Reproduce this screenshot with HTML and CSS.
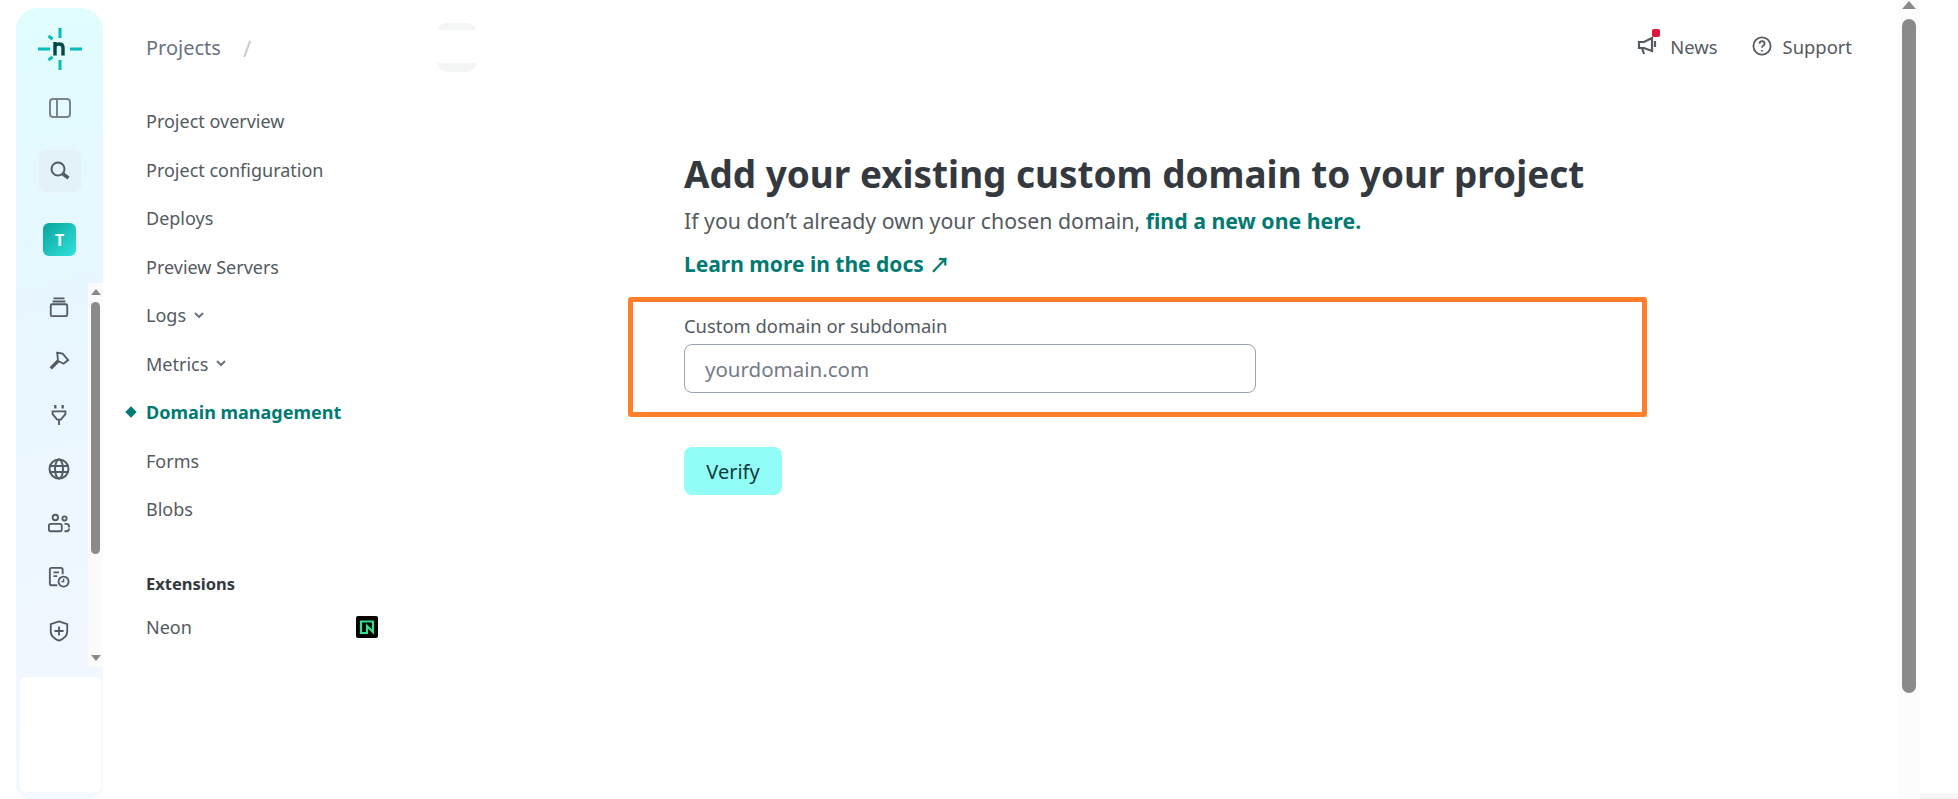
FILE: index.html
```html
<!DOCTYPE html>
<html lang="en">
<head>
  <meta charset="UTF-8">
  <title>Add custom domain</title>
  <link rel="stylesheet" href="styles.css">
</head>
<body>
  <div class="page">
    <!-- Icon rail -->
    <div class="rail">
      <div class="rail-top">
        <svg class="logo" viewBox="0 0 44 42" fill="none">
          <path d="M22 0v10M22 32v10M0 21h12M32 21h12M10.500 8l4 3M10.500 32l4-3" stroke="#05bdba" stroke-width="3"/>
          <path d="M17 14v13.500M17 18q1.500-2 4-2 4 0 4 3.500v8" stroke="#014847" stroke-width="3.400"/>
        </svg>
        <svg class="rail-icon panel" viewBox="0 0 22 20" fill="none" stroke="#7d8589" stroke-width="2">
          <rect x="1" y="1" width="20" height="18" rx="3"/><path d="M8 1v18"/>
        </svg>
        <div class="search-box">
          <svg viewBox="0 0 22 22" fill="none" stroke="#545a61" stroke-width="2">
            <circle cx="9" cy="9" r="6.500"/><path d="M14 14l5.500 4" stroke-width="3.500"/>
          </svg>
        </div>
        <div class="avatar">T</div>
      </div>
      <div class="rail-scroll">
        <div class="rail-icons">
          <svg viewBox="0 0 22 24" fill="none" stroke="#545a61" stroke-width="2">
            <rect x="2" y="9" width="18" height="13" rx="1.500"/><path d="M4 6h14M5 2.500h12"/>
          </svg>
          <svg viewBox="0 0 24 24" fill="none" stroke="#545a61" stroke-width="2">
            <path d="M10 3l6 1 6 7-5 4-6-3z"/><path d="M11 12l-8 8" stroke-width="3.500"/>
          </svg>
          <svg viewBox="0 0 22 24" fill="none" stroke="#545a61" stroke-width="2">
            <path d="M7 1v4M15 1v4" stroke-width="2.500"/><path d="M4 8h14v3l-5 6h-4l-5-6zM11 17v6"/>
          </svg>
          <svg viewBox="0 0 22 22" fill="none" stroke="#545a61" stroke-width="2">
            <circle cx="11" cy="11" r="9.500"/><ellipse cx="11" cy="11" rx="4" ry="9.500"/><path d="M2 8h18M2 14h18"/>
          </svg>
          <svg viewBox="0 0 24 22" fill="none" stroke="#545a61" stroke-width="2">
            <circle cx="8" cy="5" r="3"/><circle cx="18" cy="6" r="2.300"/>
            <rect x="1" y="12" width="14" height="8" rx="2"/><path d="M18 12h2q3 0 3 3v1M18 20h2q3 0 3-3"/>
          </svg>
          <svg viewBox="0 0 24 24" fill="none" stroke="#545a61" stroke-width="2">
            <path d="M10 21H4q-2 0-2-2V4q0-2 2-2h10q2 0 2 2v5"/><path d="M6 7h6M6 11h4"/>
            <circle cx="17" cy="17" r="5.500"/><path d="M17 14v3h-2.500" stroke-width="1.500"/>
          </svg>
          <svg viewBox="0 0 22 24" fill="none" stroke="#545a61" stroke-width="2">
            <path d="M11 1.500l9 3v8q0 6.500-9 10-9-3.500-9-10v-8z"/><path d="M11 7v10M6 12h10"/>
          </svg>
        </div>
        <div class="rail-scrollbar">
          <span class="arrow-up"></span>
          <span class="rail-thumb"></span>
          <span class="arrow-down"></span>
        </div>
      </div>
      <div class="rail-card"></div>
    </div>

    <!-- Project nav -->
    <div class="sidebar">
      <div class="breadcrumb">
        <span class="crumb">Projects</span>
        <span class="crumb-sep">/</span>
        <span class="crumb-skeleton"></span>
      </div>
      <ul class="nav">
        <li>Project overview</li>
        <li>Project configuration</li>
        <li>Deploys</li>
        <li>Preview Servers</li>
        <li>Logs
          <svg class="caret" viewBox="0 0 10 7" fill="none" stroke="#6b7280" stroke-width="2"><path d="M1 1l4 4 4-4"/></svg>
        </li>
        <li>Metrics
          <svg class="caret" viewBox="0 0 10 7" fill="none" stroke="#6b7280" stroke-width="2"><path d="M1 1l4 4 4-4"/></svg>
        </li>
        <li class="active">Domain management</li>
        <li>Forms</li>
        <li>Blobs</li>
      </ul>
      <div class="nav-heading">Extensions</div>
      <div class="nav-ext">
        <span>Neon</span>
        <svg class="neon" viewBox="0 0 22 22">
          <rect width="22" height="22" rx="2" fill="#000"/>
          <path d="M5 17V5.500h12V16l-6-6v7z" fill="none" stroke="#2fe08e" stroke-width="2.200"/>
        </svg>
      </div>
    </div>

    <!-- Main content -->
    <div class="main">
      <div class="topbar">
        <a class="top-link">
          <span class="news-icon">
            <svg viewBox="0 0 22 20" fill="none" stroke="#545a61" stroke-width="2.200">
              <path d="M2 6h5l8-4v13l-8-3H2zM5 12l2 6M18 5v6"/>
            </svg>
            <span class="news-dot"></span>
          </span>
          News
        </a>
        <a class="top-link">
          <svg class="help-icon" viewBox="0 0 20 20" fill="none" stroke="#545a61" stroke-width="1.800">
            <circle cx="10" cy="10" r="8.600"/>
            <path d="M7.500 7.800q0-2.600 2.600-2.600t2.500 2.300q0 1.400-1.400 2.200-1.200.700-1.200 2"/>
            <path d="M10 14v1.500"/>
          </svg>
          Support
        </a>
      </div>
      <div class="content">
        <h1>Add your existing custom domain to your project</h1>
        <p class="lead">If you don’t already own your chosen domain, <a>find a new one here.</a></p>
        <p class="docs"><a>Learn more in the docs ↗</a></p>
        <div class="field-box">
          <label for="domain">Custom domain or subdomain</label>
          <input id="domain" type="text" placeholder="yourdomain.com">
        </div>
        <button class="verify" type="button">Verify</button>
      </div>
    </div>

    <div class="page-scrollbar">
      <span class="arrow-up"></span>
      <span class="page-thumb"></span>
    </div>
    <div class="page-gutter"></div>
  </div>
</body>
</html>
```

FILE: styles.css
```css
/* Reset and base styles */
* {
  margin: 0;
  padding: 0;
  box-sizing: border-box;
}

html, body {
  height: 799px;
  overflow: hidden;
  background: white;
}

body {
  font-family: "Noto Sans", "Noto Sans CJK KR", sans-serif;
  color: #545a61;
}

.page {
  display: flex;
  height: 799px;
}

/* Icon rail */
.rail {
  width: 87px;
  margin: 8px 0 0 16px;
  flex-shrink: 0;
  display: flex;
  flex-direction: column;
  border-radius: 22px 22px 14px 14px;
  background: linear-gradient(165deg, #e0fdfd 0%, #e8f6ff 40%, #f5f8ff 100%);
}

.rail-top {
  height: 275px;
  display: flex;
  flex-direction: column;
  align-items: center;
}

.logo {
  width: 44px;
  height: 42px;
  margin-top: 20px;
}

.rail-icon.panel {
  width: 22px;
  height: 20px;
  margin-top: 28px;
}

.search-box {
  width: 44px;
  height: 44px;
  margin-top: 31px;
  display: flex;
  align-items: center;
  justify-content: center;
  border-radius: 8px;
  background: #e3f2f7;
  border: 1px solid #edf6fa;
}

.search-box svg {
  width: 22px;
  height: 22px;
}

.avatar {
  width: 33px;
  height: 33px;
  margin-top: 30px;
  display: flex;
  align-items: center;
  justify-content: center;
  border-radius: 6px;
  background: linear-gradient(135deg, #0aa39c, #2fe3db);
  color: white;
  font-size: 16px;
  font-weight: 700;
}

.rail-scroll {
  height: 384px;
  display: flex;
}

.rail-icons {
  width: 72px;
  padding: 13px 0 0 14px;
  display: flex;
  flex-direction: column;
  align-items: center;
  gap: 32px;
}

.rail-icons svg {
  width: 22px;
  height: 22px;
}

.rail-scrollbar {
  width: 15px;
  background: #fbfbfb;
  display: flex;
  flex-direction: column;
  align-items: center;
  padding: 6px 0;
}

.rail-thumb {
  width: 9px;
  height: 252px;
  margin-top: 7px;
  border-radius: 5px;
  background: #8a8a8a;
}

.arrow-up {
  width: 0;
  height: 0;
  border-left: 5px solid transparent;
  border-right: 5px solid transparent;
  border-bottom: 6px solid #8a8a8a;
}

.arrow-down {
  width: 0;
  height: 0;
  margin-top: auto;
  border-left: 5px solid transparent;
  border-right: 5px solid transparent;
  border-top: 6px solid #8a8a8a;
}

.rail-card {
  flex: 1;
  margin: 10px 2px 7px 4px;
  background: white;
  border-radius: 6px;
}

/* Project nav */
.sidebar {
  width: 375px;
  flex-shrink: 0;
  padding: 0 0 0 43px;
}

.breadcrumb {
  height: 97px;
  padding-top: 23px;
  display: flex;
  align-items: flex-start;
}

.crumb {
  font-size: 20px;
  line-height: 50px;
  color: #6b7280;
}

.crumb-sep {
  margin-left: 22px;
  font-size: 22px;
  line-height: 50px;
  color: #c4c8cc;
}

.crumb-skeleton {
  width: 40px;
  height: 49px;
  margin-left: 186px;
  border-radius: 10px;
  background: linear-gradient(#f4f6f6 0 7px, white 7px 40px, #f4f6f6 40px);
}

.nav {
  list-style: none;
}

.nav li {
  height: 48.500px;
  display: flex;
  align-items: center;
  gap: 8px;
  font-size: 18px;
  position: relative;
}

.caret {
  width: 10px;
  height: 7px;
}

.nav li.active {
  color: #007a72;
  font-weight: 700;
}

/* diamond marker in front of the current page */
.nav li.active::before {
  content: "";
  position: absolute;
  left: -19px;
  top: 20px;
  width: 8px;
  height: 8px;
  background: #007a72;
  transform: rotate(45deg);
}

.nav-heading {
  margin-top: 37px;
  font-size: 16.500px;
  font-weight: 700;
  color: #33393f;
  line-height: 26px;
}

.nav-ext {
  width: 232px;
  height: 48px;
  margin-top: 6px;
  display: flex;
  align-items: center;
  justify-content: space-between;
  font-size: 18px;
}

.neon {
  width: 22px;
  height: 22px;
}

/* Main content */
.main {
  flex: 1;
  min-width: 0;
}

.topbar {
  height: 92px;
  padding: 30px 46px 0 0;
  display: flex;
  justify-content: flex-end;
  gap: 34px;
}

.top-link {
  display: flex;
  align-items: center;
  gap: 11px;
  height: 32px;
  font-size: 18.400px;
}

.news-icon {
  position: relative;
  width: 22px;
  height: 20px;
}

.news-icon svg {
  width: 22px;
  height: 20px;
}

.news-dot {
  position: absolute;
  top: -7px;
  right: -1px;
  width: 8px;
  height: 8px;
  border-radius: 2px;
  background: #e0163c;
}

.help-icon {
  width: 20px;
  height: 20px;
}

.content {
  padding: 56px 0 0 206px;
}

h1 {
  font-size: 36.900px;
  line-height: 52px;
  font-weight: 700;
  color: #33393f;
}

.lead, .docs {
  line-height: 30px;
}

.lead {
  margin-top: 6px;
  font-size: 21.300px;
}

.docs {
  margin-top: 13px;
  font-size: 21px;
}

.lead a, .docs a {
  color: #007a72;
  font-weight: 700;
}

.field-box {
  width: 1019px;
  height: 120px;
  margin: 18px 0 0 -56px;
  padding: 7px 0 0 51px;
  border: 5px solid #ff7f2a;
  border-radius: 3px;
}

label {
  display: block;
  margin-bottom: 1px;
  font-size: 18.400px;
  line-height: 34px;
}

input {
  display: block;
  width: 572px;
  height: 49px;
  padding: 0 20px;
  border: 1px solid #9aa3af;
  border-radius: 8px;
  font-family: inherit;
  font-size: 20.500px;
  outline: none;
}

input::placeholder {
  color: #737b86;
  opacity: 1;
}

.verify {
  display: block;
  width: 98px;
  height: 48px;
  margin-top: 30px;
  border: none;
  border-radius: 8px;
  background: #91fdf6;
  color: #0f3b3e;
  font-family: inherit;
  font-size: 20px;
}

/* Page scrollbar */
.page-scrollbar {
  width: 22px;
  flex-shrink: 0;
  background: #fcfcfc;
  display: flex;
  flex-direction: column;
  align-items: center;
}

.page-scrollbar .arrow-up {
  margin-top: 1px;
  border-left-width: 7px;
  border-right-width: 7px;
  border-bottom-width: 8px;
}

.page-thumb {
  width: 14px;
  height: 674px;
  margin-top: 10px;
  border-radius: 7px;
  background: #8a8a8a;
}

.page-gutter {
  width: 38px;
  flex-shrink: 0;
  background: linear-gradient(white 0 793px, #f5f5f5 793px);
}
```
